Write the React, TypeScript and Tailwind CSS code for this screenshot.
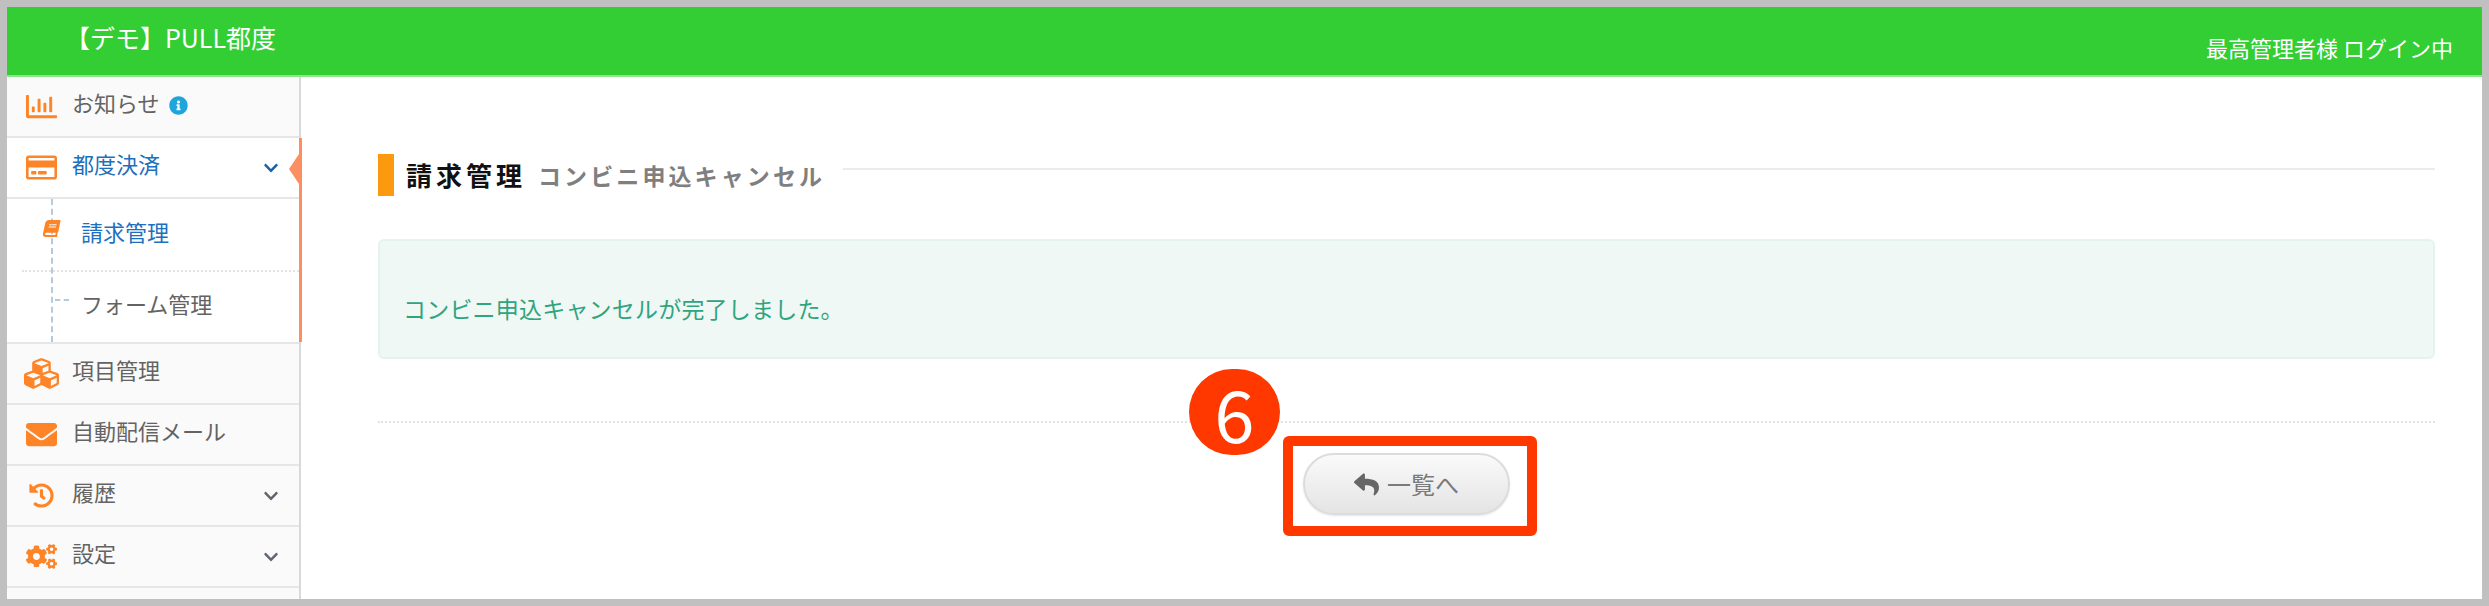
import type { ReactNode } from "react";
import { FaBook, FaChevronDown, FaCogs, FaCubes, FaEnvelope, FaHistory, FaInfoCircle, FaRegChartBar, FaRegCreditCard, FaReply } from "react-icons/fa";

const FONT = { fontFamily: '"Noto Sans CJK JP", "Noto Sans", sans-serif' };

function NavRow({ icon, label, chevron, active, extra }: { icon: ReactNode; label: string; chevron?: boolean; active?: boolean; extra?: ReactNode }) {
  return (
    <div className={`flex h-[61px] items-center border-b-2 border-[#e6e6e6] pr-[20px] ${active ? "bg-white" : "bg-[#fafafa]"}`}>
      <div className="flex w-[65px] shrink-0 justify-center pl-[3px] text-[#fd8427]">{icon}</div>
      <span className={`-mt-[9px] text-[22px] leading-none ${active ? "text-[#1c70bd]" : "text-[#636363]"}`}>{label}</span>
      {extra}
      {chevron && <FaChevronDown className={`ml-auto text-[16px] ${active ? "text-[#1c5fa5]" : "text-[#5f6670]"}`} />}
    </div>
  );
}

function Sidebar() {
  return (
    <aside className="w-[294px] shrink-0 border-r-2 border-[#d9d9d9] bg-[#fafafa]">
      <NavRow
        icon={<FaRegChartBar className="text-[31px]" />}
        label="お知らせ"
        extra={<FaInfoCircle className="-mt-[3px] ml-[9px] text-[19px] text-[#1ea5dc]" />}
      />
      <div className="relative">
        <NavRow icon={<FaRegCreditCard className="text-[31px]" />} label="都度決済" chevron active />
        {/* tree */}
        <div className="relative bg-white">
          <div className="absolute bottom-0 left-[44px] top-0 border-l-2 border-dashed border-[#b5c9df]" />
          <div className="ml-[15px] flex h-[73px] items-center border-b-2 border-dotted border-[#e3e3e3] pl-[59px]">
            <span className="-mt-[7px] text-[22px] leading-none text-[#1c70bd]">請求管理</span>
          </div>
          <div className="ml-[15px] flex h-[70px] items-center pl-[59px]">
            <span className="-mt-[8px] text-[22px] leading-none text-[#636363]">フォーム管理</span>
          </div>
          <FaBook className="absolute left-[36px] top-[21px] -skew-x-12 text-[17px] text-[#fd8427]" />
          <div className="absolute left-[48px] top-[100px] w-[14px] border-t-2 border-dashed border-[#b5c9df]" />
        </div>
        <div className="absolute bottom-0 right-[-3px] top-0 w-[3px] bg-[#fb8f62]" />
        <div className="absolute right-0 top-[16px] h-[30px] w-[10px] bg-[#fb8f62] [clip-path:polygon(100%_0,100%_100%,0_50%)]" />
      </div>
      <div className="border-t-2 border-[#e6e6e6]">
        <NavRow icon={<FaCubes className="text-[35px]" />} label="項目管理" />
      </div>
      <NavRow icon={<FaEnvelope className="text-[31px]" />} label="自動配信メール" />
      <NavRow icon={<FaHistory className="text-[25px]" />} label="履歴" chevron />
      <NavRow icon={<FaCogs className="text-[31px]" />} label="設定" chevron />
    </aside>
  );
}

export default function App() {
  return (
    <div className="flex h-[606px] w-[2489px] flex-col overflow-hidden border-[7px] border-[#c0c0c0] bg-white" style={FONT}>
      <header className="flex h-[70px] shrink-0 items-center justify-between border-b-2 border-[#8ee38f] bg-[#32ce33] pl-[58px] pr-[29px] text-white">
        <div className="-mt-[8px] text-[25px] leading-none">【デモ】PULL都度</div>
        <div className="mt-[12px] text-[22px] leading-none">最高管理者様 ログイン中</div>
      </header>
      <div className="flex min-h-0 flex-1">
        <Sidebar />
        <main className="relative flex-1 pl-[77px] pr-[47px]">
          <div className="mt-[77px] flex h-[42px] items-center">
            <div className="h-[42px] w-[16px] bg-[#fb9a0e]" />
            <h1 className="ml-[12px] text-[26px] font-bold leading-none tracking-[4px] text-[#111111]">請求管理</h1>
            <span className="ml-[12px] text-[23px] font-bold leading-none tracking-[3.1px] text-[#7f7f7f]">コンビニ申込キャンセル</span>
            <div className="ml-[18px] mt-[-12px] flex-1 border-t-2 border-[#ebebeb]" />
          </div>
          <div className="mt-[43px] flex h-[120px] items-end rounded-[6px] border-2 border-[#e5f3ef] bg-[#f0f8f5] px-[23px] pb-[37px] text-[23px] leading-none tracking-[0.2px] text-[#2fa57f]">
            コンビニ申込キャンセルが完了しました。
          </div>
          <div className="mt-[62px] border-t-2 border-dotted border-[#e3e3e3]" />
          <div className="mt-[30px] flex justify-center">
            <button className="flex h-[62px] w-[207px] items-center justify-center gap-[8px] rounded-full border-2 border-[#dcdcdc] bg-gradient-to-b from-[#fafafa] to-[#e4e4e4] text-[24px] leading-none text-[#7a7a7a] shadow-[0_1px_2px_rgba(0,0,0,0.1)]">
              <FaReply className="text-[25px] text-[#666666]" />
              一覧へ
            </button>
          </div>
          {/* annotation */}
          <div className="absolute left-[888px] top-[292px] flex h-[86px] w-[91px] items-center justify-center rounded-full bg-[#ff3800] text-[72px] leading-none text-white">6</div>
          <div className="absolute left-[982px] top-[359px] h-[100px] w-[254px] rounded-[6px] border-[10px] border-[#ff3800]" />
        </main>
      </div>
    </div>
  );
}
